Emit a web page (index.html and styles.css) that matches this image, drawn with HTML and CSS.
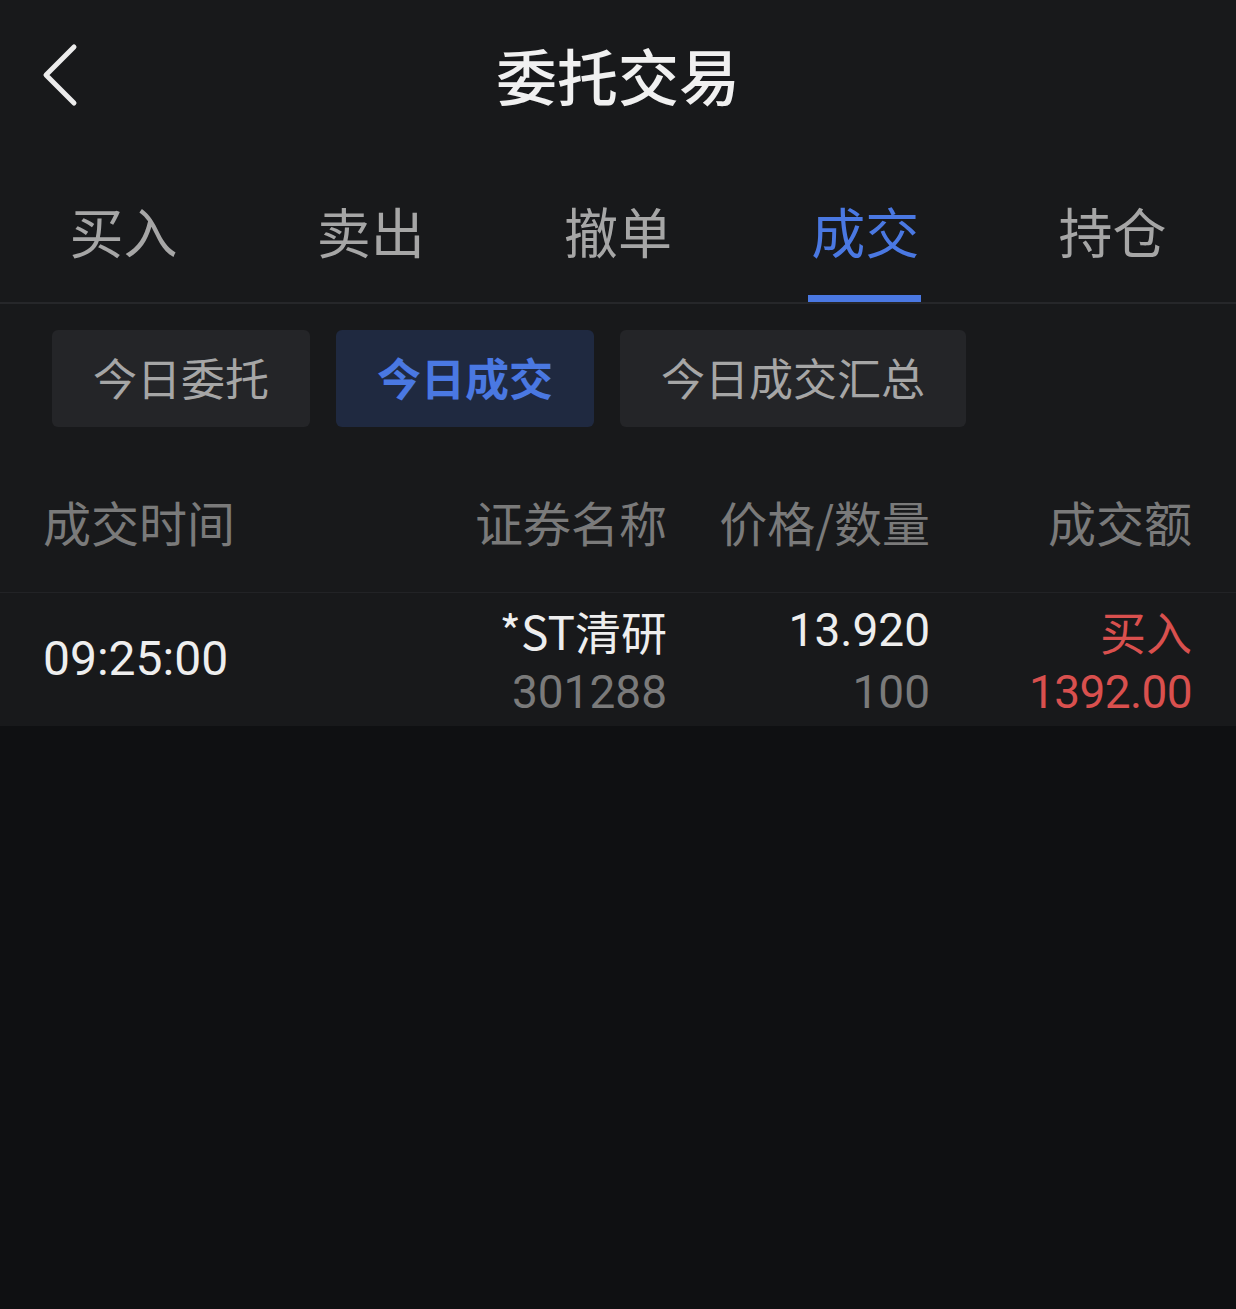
FILE: index.html
```html
<!DOCTYPE html>
<html lang="zh-CN">
<head>
<meta charset="UTF-8">
<meta name="viewport" content="width=device-width, initial-scale=1.0">
<title>委托交易</title>
<link rel="stylesheet" href="styles.css">
</head>
<body>

<div class="page">
  <header class="top-bar">
    <a class="back" href="#">
      <svg width="40" height="64" viewBox="0 0 40 64"><path d="M34 4 L6 32 L34 60" fill="none" stroke="#ececec" stroke-width="5" stroke-linecap="round" stroke-linejoin="round"/></svg>
    </a>
    <h1>委托交易</h1>
  </header>

  <nav class="tabs">
    <a href="#">买入</a>
    <a href="#">卖出</a>
    <a href="#">撤单</a>
    <a href="#" class="active">成交</a>
    <a href="#">持仓</a>
  </nav>

  <div class="sub-tabs">
    <button>今日委托</button>
    <button class="active">今日成交</button>
    <button>今日成交汇总</button>
  </div>

  <div class="table-head">
    <span class="col-time">成交时间</span>
    <span>证券名称</span>
    <span>价格/数量</span>
    <span>成交额</span>
  </div>

  <div class="trade-row">
    <div class="col-time num">09:25:00</div>
    <div class="cell">
      <span class="main">*ST清研</span>
      <span class="sub num">301288</span>
    </div>
    <div class="cell">
      <span class="main num">13.920</span>
      <span class="sub num">100</span>
    </div>
    <div class="cell buy">
      <span class="main">买入</span>
      <span class="sub num tight">1392.00</span>
    </div>
  </div>
</div>

</body>
</html>
```

FILE: styles.css
```css
:root {
  --bg: #18191b;
  --bg-dark: #0f1012;
  --blue: #4a78e2;
  --grey: #a6a6a6;
  --muted: #7a7a7a;
  --red: #d9504e;
  --line: #26272a;
}

body {
  margin: 0;
  background: var(--bg-dark);
  font-family: "Noto Sans CJK SC", "Noto Sans", sans-serif;
  color: #ececec;
}

.page {
  width: 1236px;
  background: var(--bg);
}

.top-bar {
  position: relative;
  height: 150px;
  display: flex;
  align-items: center;
  justify-content: center;
}

.top-bar h1 {
  margin: 0;
  font-size: 61px;
  font-weight: 500;
  line-height: 1;
  padding-bottom: 2px;
  color: #f0f0f0;
}

.back {
  position: absolute;
  left: 40px;
  top: 43px;
  display: block;
  line-height: 0;
}

.tabs {
  display: grid;
  grid-template-columns: repeat(5, 1fr);
  height: 152px;
  border-bottom: 2px solid var(--line);
}

.tabs a {
  position: relative;
  display: flex;
  justify-content: center;
  align-items: center;
  padding-top: 8px;
  font-size: 54px;
  color: var(--grey);
  text-decoration: none;
}

.tabs a.active {
  color: var(--blue);
}

.tabs a.active::after {
  content: "";
  position: absolute;
  bottom: 0;
  left: 50%;
  width: 113px;
  margin-left: -57px;
  height: 7px;
  background: var(--blue);
}

.sub-tabs {
  display: flex;
  gap: 26px;
  padding: 26px 52px 0;
}

.sub-tabs button {
  height: 97px;
  padding: 0 41px 4px;
  border: none;
  border-radius: 6px;
  background: #242528;
  color: var(--grey);
  font-family: inherit;
  font-size: 44px;
}

.sub-tabs button.active {
  background: #1f2940;
  color: var(--blue);
  font-weight: 700;
}

.table-head,
.trade-row {
  display: grid;
  grid-template-columns: 387px 237px 263px 1fr;
  padding: 0 44px 0 43px;
  text-align: right;
}

.table-head {
  height: 142px;
  margin-top: 23px;
  align-items: center;
  border-bottom: 1px solid #222326;
  font-size: 48px;
  color: var(--muted);
}

.col-time {
  text-align: left;
}

.trade-row {
  height: 124px;
  padding-top: 6px;
  padding-bottom: 3px;
  align-items: center;
}

.trade-row .col-time {
  font-size: 48px;
  color: #eeeeee;
  padding-bottom: 6px;
}

.num {
  font-family: Roboto, "Noto Sans", sans-serif;
}

.num.tight {
  letter-spacing: -0.6px;
}

.cell {
  display: flex;
  flex-direction: column;
  align-items: flex-end;
}

.cell span {
  height: 62px;
  line-height: 62px;
  font-size: 46px;
}

.cell .main {
  color: #eeeeee;
}

.cell .sub {
  color: var(--muted);
}

.cell.buy .main,
.cell.buy .sub {
  color: var(--red);
}
```
